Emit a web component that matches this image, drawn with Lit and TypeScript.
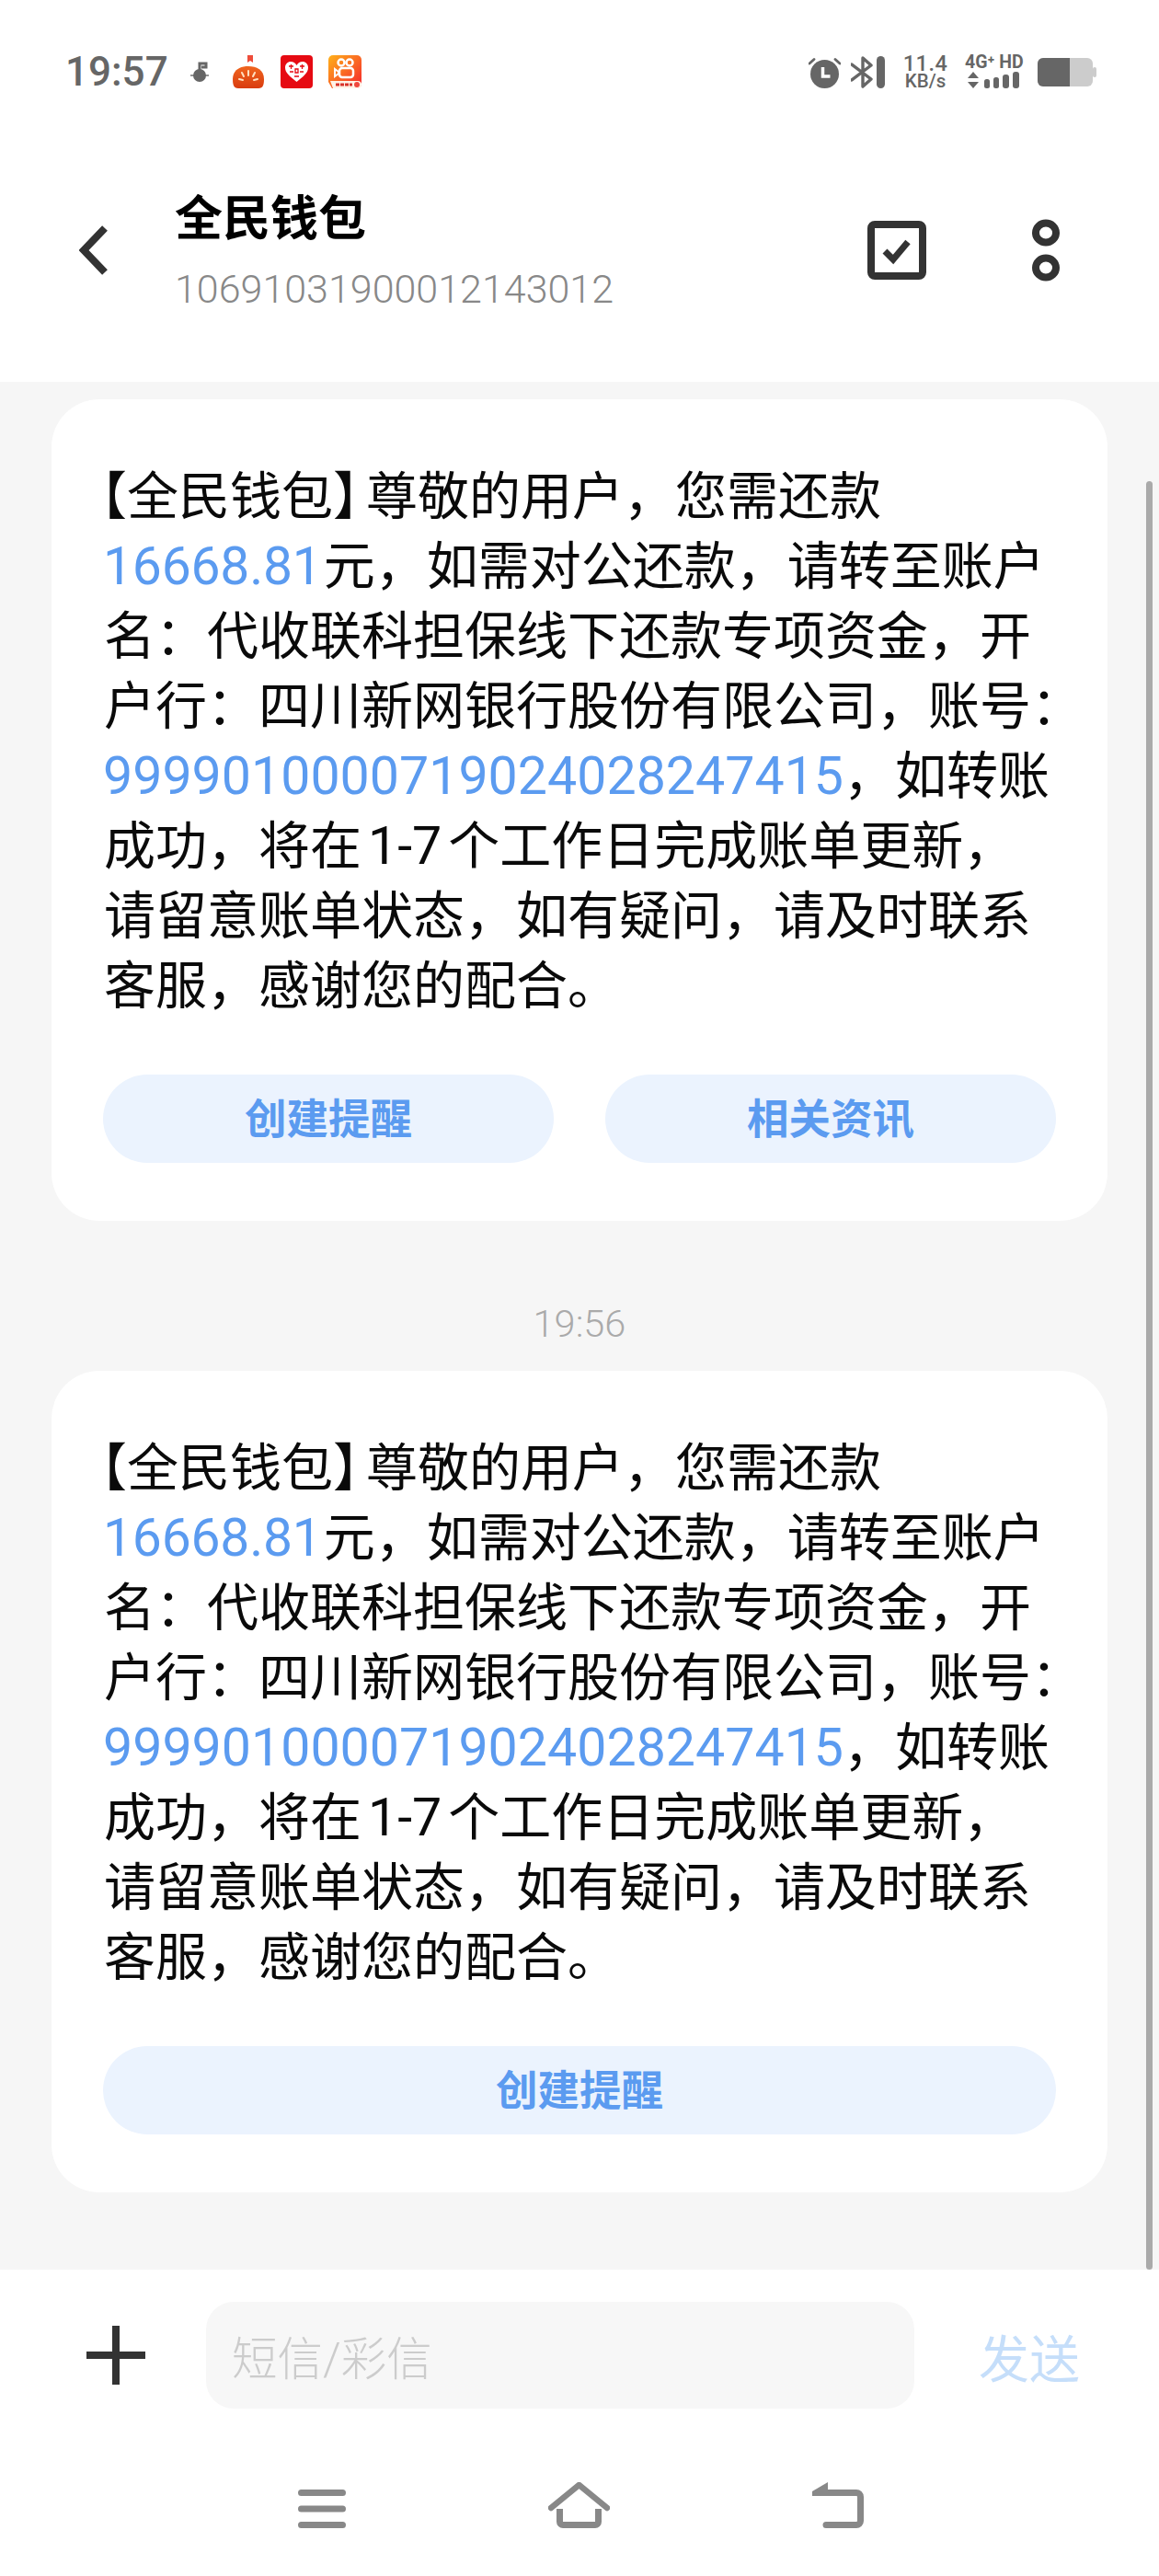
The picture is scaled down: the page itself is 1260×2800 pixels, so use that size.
import { LitElement, html, css } from "lit";
import { customElement } from "lit/decorators.js";

type Seg = string | { n: string } | { bl: string } | { br: string } | { p: string } | { a: string };

const LINES: Seg[][] = [
  [{ bl: "【" }, "全民钱包", { br: "】" }, "尊敬的用户，您需还款"],
  [{ a: "16668.81" }, "元，如需对公还款，请转至账户"],
  ["名：代收联科担保线下还款专项资金，开"],
  ["户行：四川新网银行股份有限公司，账号："],
  [{ n: "9999010000719024028247415" }, "，如转账"],
  ["成功，将在", { p: "1-7" }, "个工作日完成账单更新，"],
  ["请留意账单状态，如有疑问，请及时联系"],
  ["客服，感谢您的配合。"],
];

@customElement("app-root")
export class AppRoot extends LitElement {
  static styles = css`
    :host {
      display: block;
      width: 1260px;
      height: 2800px;
      font-family: "Roboto", "Noto Sans CJK SC", sans-serif;
      background: #fff;
      overflow: hidden;
    }
    .page { display: flex; flex-direction: column; height: 2800px; }
    .head { height: 415px; flex: none; background: #fff; box-sizing: border-box; }
    .status { height: 156px; display: flex; align-items: center; padding: 0 68px 0 71px; box-sizing: border-box; color: #666; }
    .clock { font-size: 44px; font-weight: 500; width: 109px; line-height: 1; }
    .status svg { display: block; flex: none; }
    .left-icons { display: flex; align-items: center; margin-left: 27px; }
    .right-icons { display: flex; align-items: center; margin-left: auto; }
    .speed { display: flex; flex-direction: column; align-items: center; margin-left: 18px; width: 52px; }
    .speed b { font-size: 23.5px; line-height: 20px; font-weight: 500; letter-spacing: 0.5px; }
    .speed span { font-size: 20.5px; line-height: 19px; font-weight: 500; }
    .net { display: flex; flex-direction: column; margin-left: 17px; width: 68px; }
    .net b { font-size: 19.5px; line-height: 18px; font-weight: 700; white-space: nowrap; }
    .bar { display: flex; align-items: flex-start; height: 232px; padding: 0 108px 0 86px; }
    .bar > svg { align-self: center; display: block; flex: none; }
    .who { margin-left: 72px; padding-top: 48px; }
    .name { font-size: 52px; line-height: 70px; font-weight: 700; color: #000; }
    .num { font-size: 43px; line-height: 80px; font-weight: 300; color: #888; }
    .chk { margin-left: auto; }
    .dots { margin-left: 115px; }
    .content {
      flex: 1; background: #f6f6f6; position: relative; padding: 19px 56px 0;
      display: flex; flex-direction: column; box-sizing: border-box;
    }
    .card { background: #fff; border-radius: 52px; padding: 68px 56px 63px 57px; height: 893px; box-sizing: border-box; }
    .line { font-size: 56px; line-height: 76px; color: #0a0a0a; white-space: nowrap; }
    .link { color: #5b9bf0; font-size: 57.3px; margin-left: -1px; }
    .amount { color: #5b9bf0; font-size: 57px; margin: 0 2px 0 -1px; letter-spacing: -0.2px; }
    .plain { font-size: 57.3px; margin: 0 7px; }
    .bl { font-feature-settings: "halt"; margin-left: -3px; }
    .br { font-feature-settings: "halt"; margin-right: 8px; }
    .btns { display: flex; gap: 56px; margin: 58px 0 0 -1px; }
    .btn {
      flex: 1; height: 96px; border-radius: 48px; background: #ebf3fe; color: #5b9bf0;
      font-size: 45.5px; font-weight: 700; display: flex; align-items: center; justify-content: center;
      padding-bottom: 6px; box-sizing: border-box;
    }
    .time { height: 163px; display: flex; align-items: center; justify-content: center; font-size: 41.5px; font-weight: 300; color: #aaa; padding-top: 59px; box-sizing: border-box; }
    .thumb { position: absolute; left: 1246px; top: 108px; width: 7px; bottom: 0; background: #aaa; border-radius: 3.5px; }
    .foot { flex: none; height: 333px; background: #fff; box-sizing: border-box; padding-top: 35px; }
    .compose { display: flex; align-items: center; padding-left: 94px; }
    .compose svg { display: block; flex: none; }
    .input {
      margin-left: 66px; width: 770px; height: 116px; border-radius: 30px; background: #f7f7f7;
      display: flex; align-items: center; padding-left: 28px; box-sizing: border-box;
      font-size: 49.5px; font-weight: 300; color: #ccc;
    }
    .send { margin-left: 70px; font-size: 55px; color: #c5defa; font-weight: 400; }
    .nav { display: flex; align-items: flex-end; gap: 220px; padding-left: 324px; margin-top: 80px; }
    .nav svg { display: block; flex: none; }
  `;

  private seg(s: Seg) {
    if (typeof s === "string") return s;
    if ("n" in s) return html`<span class="link">${s.n}</span>`;
    if ("a" in s) return html`<span class="amount">${s.a}</span>`;
    if ("p" in s) return html`<span class="plain">${s.p}</span>`;
    if ("bl" in s) return html`<span class="bl">${s.bl}</span>`;
    return html`<span class="br">${s.br}</span>`;
  }

  private card(buttons: string[]) {
    return html`<div class="card" lang="zh-CN">
      ${LINES.map((l) => html`<div class="line">${l.map((s) => this.seg(s))}</div>`)}
      <div class="btns">${buttons.map((b) => html`<div class="btn">${b}</div>`)}</div>
    </div>`;
  }

  private leftIcons() {
    return html`<div class="left-icons">
      <svg width="20" height="24" viewBox="0 0 20 24"><circle cx="10" cy="16" r="7" fill="#666"/><path d="M10 12V3h7v4h-5" fill="none" stroke="#666" stroke-width="3"/><path d="M0 16h20" stroke="#666" stroke-width="1.4"/></svg>
      <svg style="margin-left:25px" width="36" height="36" viewBox="0 0 36 36">
        <defs><linearGradient id="tm" x1="0" y1="0" x2="0" y2="1"><stop offset="0" stop-color="#f0651e"/><stop offset="1" stop-color="#d93c0f"/></linearGradient></defs>
        <path d="M17 0h6v8l-3-2-3 2z" fill="#ee4d3a"/>
        <path d="M1 26C1 16 9 12 18 12s17 4 17 14c0 6-1 10-6 10H7c-5 0-6-4-6-10z" fill="url(#tm)"/>
        <path d="M18 17v5M11 19l2 4M25 19l-2 4M8 26l4 1M28 26l-4 1" stroke="#ffe0c0" stroke-width="2" stroke-linecap="round"/>
      </svg>
      <svg style="margin-left:17px" width="35" height="36" viewBox="0 0 35 36">
        <rect width="35" height="36" rx="4" fill="#e60a12"/>
        <path d="M17.5 29C10 23 5 19 5 13.5 5 9.5 8 7 11 7c3 0 5 1.5 6.5 4C19 8.5 21 7 24 7c3 0 6 2.5 6 6.5C30 19 25 23 17.5 29z" fill="#fff"/>
        <path d="M9 12h5M11.5 10v5M21 12h5M23.5 10v5M10 18h4M21 18h4M16 15h3v4h-3zM15 23h5" stroke="#e60a12" stroke-width="1.3" fill="none"/>
      </svg>
      <svg style="margin-left:17px" width="36" height="36" viewBox="0 0 36 36">
        <defs><linearGradient id="ks" x1="0" y1="0" x2="1" y2="1"><stop offset="0" stop-color="#ffb21a"/><stop offset="1" stop-color="#f5222d"/></linearGradient></defs>
        <path d="M5 0h26a5 5 0 0 1 5 5v26a5 5 0 0 1-5 5H4l-4-7V5a5 5 0 0 1 5-5z" fill="url(#ks)"/>
        <circle cx="14" cy="8" r="3.5" fill="none" stroke="#fff" stroke-width="2.5"/><circle cx="23" cy="8" r="3.5" fill="none" stroke="#fff" stroke-width="2.5"/>
        <rect x="12" y="14" width="15" height="10" rx="3" fill="none" stroke="#fff" stroke-width="2.5"/><path d="M7 15l4 3v2l-4 3z" fill="none" stroke="#fff" stroke-width="2"/>
        <path d="M2 28h30a4 4 0 0 1 4 3v1a4 4 0 0 1-4 4H5z" fill="#fff3e6"/><path d="M8 32h18" stroke="#d8322a" stroke-width="3" stroke-dasharray="4 1"/><circle cx="31" cy="32" r="3" fill="#f0483e"/>
      </svg>
    </div>`;
  }

  private rightIcons() {
    return html`<div class="right-icons">
      <svg width="35" height="35" viewBox="0 0 35 35">
        <circle cx="17.5" cy="19.5" r="15.5" fill="#666"/>
        <path d="M1 8l5-4.5M34 8l-5-4.5" stroke="#666" stroke-width="2.8" stroke-linecap="round"/>
        <path d="M15.5 12v10h8" fill="none" stroke="#fff" stroke-width="3.5"/>
      </svg>
      <svg style="margin-left:11px" width="37" height="35" viewBox="0 0 37 35">
        <path d="M1 9l21 16-9 8V2l9 8L1 26" fill="none" stroke="#666" stroke-width="3.4" stroke-linejoin="round" stroke-linecap="round"/>
        <rect x="28" y="0" width="9" height="35" rx="4.5" fill="#666"/>
      </svg>
      <div class="speed"><b>11.4</b><span>KB/s</span></div>
      <div class="net">
        <b>4G⁺ HD</b>
        <svg width="60" height="20" viewBox="0 0 60 20">
          <path d="M9 1l6 7H3zM9 19l6-7H3z" fill="#666"/>
          <rect x="21" y="9" width="6" height="10" rx="2.5" fill="#666"/>
          <rect x="31" y="7" width="6" height="12" rx="2.5" fill="#666"/>
          <rect x="41" y="4" width="7" height="15" rx="3" fill="#666"/>
          <rect x="52" y="1" width="7" height="18" rx="3" fill="#666"/>
        </svg>
      </div>
      <svg style="margin-left:11px" width="64" height="31" viewBox="0 0 64 31">
        <rect x="0" y="0" width="60" height="31" rx="6" fill="#ccc"/>
        <path d="M6 0h29v31H6a6 6 0 0 1-6-6V6a6 6 0 0 1 6-6z" fill="#666"/>
        <rect x="60" y="10" width="4" height="11" rx="2" fill="#ccc"/>
      </svg>
    </div>`;
  }

  render() {
    return html`<div class="page">
      <div class="head">
        <div class="status">
          <div class="clock">19:57</div>
          ${this.leftIcons()}
          ${this.rightIcons()}
        </div>
        <div class="bar">
          <svg width="32" height="54" viewBox="0 0 32 54"><path d="M28 3L5 27l23 24" fill="none" stroke="#333" stroke-width="8"/></svg>
          <div class="who" lang="zh-CN">
            <div class="name">全民钱包</div>
            <div class="num">10691031900012143012</div>
          </div>
          <svg class="chk" width="64" height="64" viewBox="0 0 64 64">
            <rect x="4" y="4" width="56" height="56" rx="4" fill="none" stroke="#333" stroke-width="8"/>
            <path d="M19 33l9 9 16-19" fill="none" stroke="#333" stroke-width="7"/>
          </svg>
          <svg class="dots" width="30" height="68" viewBox="0 0 30 68">
            <ellipse cx="15" cy="15" rx="11" ry="10.5" fill="none" stroke="#333" stroke-width="8"/>
            <ellipse cx="15" cy="53" rx="11" ry="10.5" fill="none" stroke="#333" stroke-width="8"/>
          </svg>
        </div>
      </div>
      <div class="content">
        ${this.card(["创建提醒", "相关资讯"])}
        <div class="time">19:56</div>
        ${this.card(["创建提醒"])}
        <div class="thumb"></div>
      </div>
      <div class="foot" lang="zh-CN">
        <div class="compose">
          <svg width="64" height="64" viewBox="0 0 64 64"><path d="M32 0v64M0 32h64" stroke="#333" stroke-width="8" stroke-linecap="round"/></svg>
          <div class="input">短信/彩信</div>
          <div class="send">发送</div>
        </div>
        <div class="nav">
          <svg width="52" height="42" viewBox="0 0 52 42"><path d="M3.5 3.5h45M3.5 21h45M3.5 38.5h45" stroke="#888" stroke-width="7" stroke-linecap="round"/></svg>
          <svg width="67" height="50" viewBox="0 0 67 50"><path d="M3 28L33.5 3 64 28" fill="none" stroke="#888" stroke-width="6.5" stroke-linejoin="round" stroke-linecap="round"/><path d="M12.5 29v14a3.5 3.5 0 0 0 3.5 3.5h35a3.5 3.5 0 0 0 3.5-3.5V29" fill="none" stroke="#888" stroke-width="7"/></svg>
          <svg width="56" height="50" viewBox="0 0 56 50"><path d="M17 0L0 10v5h17z" fill="#888"/><path d="M10 11.5h38a4.5 4.5 0 0 1 4.5 4.500v26a4.5 4.5 0 0 1-4.5 4.5H15" fill="none" stroke="#888" stroke-width="7" stroke-linecap="round"/></svg>
        </div>
      </div>
    </div>`;
  }
}
